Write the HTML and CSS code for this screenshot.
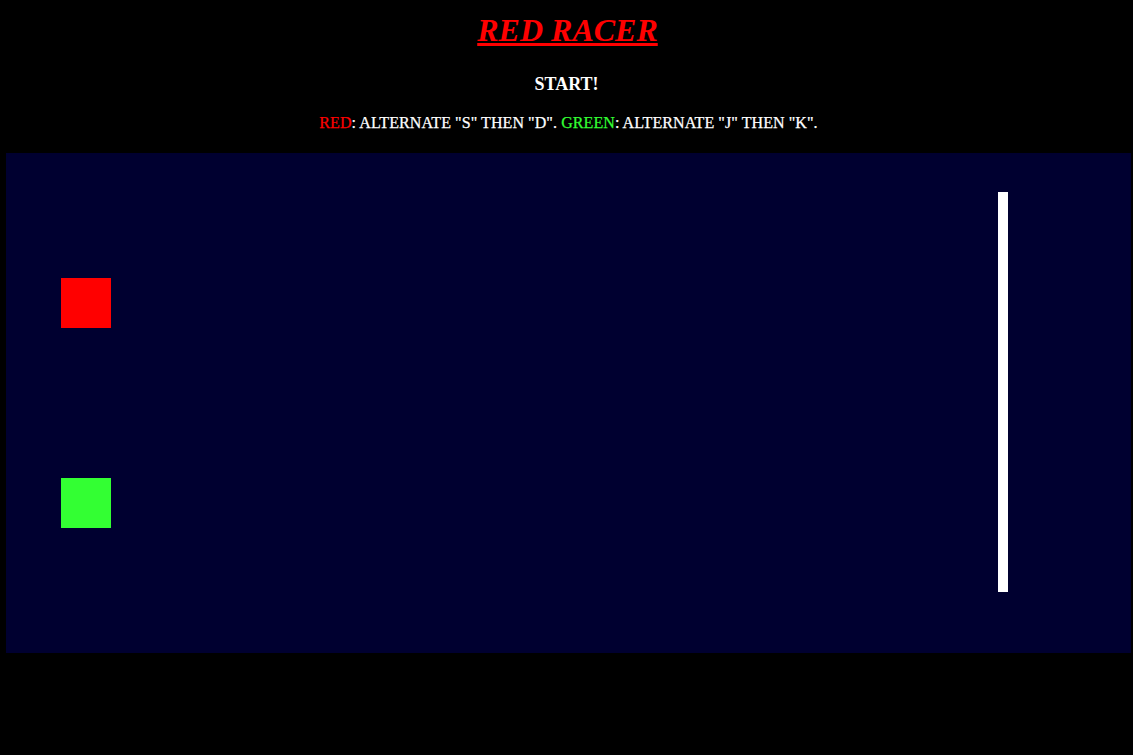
FILE: index.html
```html
<!DOCTYPE html>
<html>
<head>
<meta charset="utf-8">
<title>Red Racer</title>
<link rel="stylesheet" href="styles.css">
</head>
<body>
<header class="header">
  <h1 class="title">RED RACER</h1>
  <div class="status">START!</div>
  <div class="help"><span class="red">RED</span>: ALTERNATE "S" THEN "D". <span class="green">GREEN</span>: ALTERNATE "J" THEN "K".</div>
</header>
<main class="track">
  <div class="lanes">
    <div class="car car-red"></div>
    <div class="car car-green"></div>
  </div>
  <div class="finish"></div>
</main>
</body>
</html>
```
FILE: styles.css
```css
html, body {
  margin: 0;
  padding: 0;
  background: #000;
  height: 100%;
}
body {
  font-family: "Liberation Serif", "Times New Roman", serif;
  color: #fff;
}
.header {
  display: flex;
  flex-direction: column;
  align-items: center;
  text-align: center;
}
.title {
  margin: 12px 0 0 2px;
  font-size: 32px;
  line-height: 36px;
  font-weight: bold;
  font-style: italic;
  text-decoration: underline;
  color: #ff0000;
}
.status {
  margin-top: 26px;
  font-size: 18px;
  line-height: 21px;
  font-weight: bold;
}
.help {
  margin: 19px 0 0 4px;
  font-size: 16px;
  line-height: 18px;
  letter-spacing: 0.08px;
  -webkit-text-stroke: 0.25px currentColor;
}
.red { color: #ff0000; }
.green { color: #33ff33; }
.track {
  margin: 21px 0 0 6px;
  width: 1125px;
  height: 500px;
  background: #000030;
  display: flex;
  box-sizing: border-box;
  padding: 39px 0 0 55px;
}
.lanes {
  display: flex;
  flex-direction: column;
  gap: 150px;
  padding-top: 86px;
  flex: 1;
}
.car {
  width: 50px;
  height: 50px;
}
.car-red { background: #ff0000; }
.car-green { background: #33ff33; }
.finish {
  width: 10px;
  height: 400px;
  background: #fff;
  margin-right: 123px;
}
```
